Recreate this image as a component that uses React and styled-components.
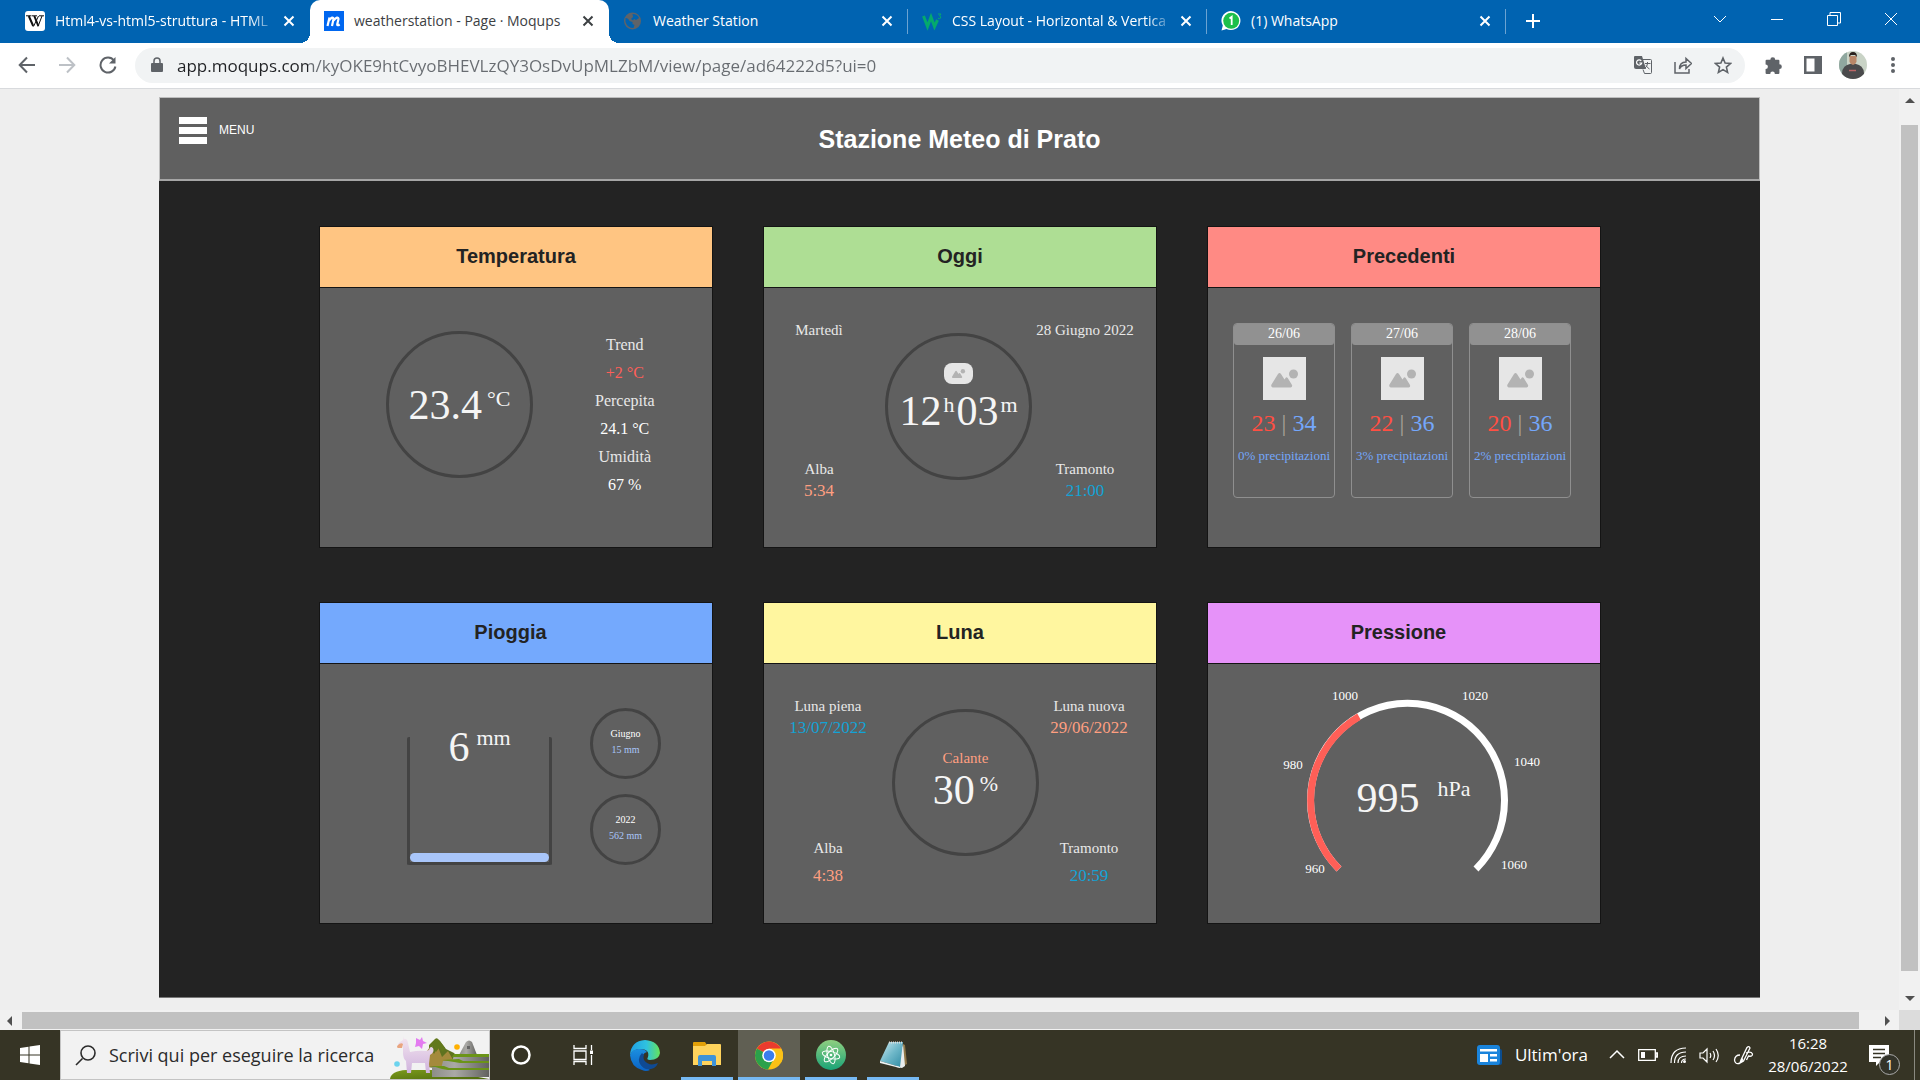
import React from "react";
import styled, { createGlobalStyle, css } from "styled-components";

const UI = `"Open Sans", "Noto Sans", sans-serif`;
const ARIAL = `"Liberation Sans", Arial, sans-serif`;
const SERIF = `Georgia, "Liberation Serif", serif`;

const C = {
  white: "#f5f5f5",
  label: "#e8e8e8",
  red: "#ff5f59",
  coral: "#ff9f80",
  cyan: "#13a3d6",
  blue: "#74a7fb",
  pale: "#a9c6fa",
  ring: "#434343",
  panel: "#606060",
};

const Global = createGlobalStyle`
  *, *::before, *::after { box-sizing: border-box; }
  html, body, #root { height: 100%; }
  body { margin: 0; overflow: hidden; font-family: ${UI}; }
  button, input { font: inherit; color: inherit; border: 0; padding: 0; margin: 0; background: none; outline: 0; }
  h1, h2, p { margin: 0; }
  svg { display: block; flex: none; }
`;

const Screen = styled.div`
  height: 100vh;
  display: flex;
  flex-direction: column;
`;

/* ---------- browser ---------- */

const TabStrip = styled.div`
  height: 43px;
  flex: none;
  display: flex;
  padding-left: 11px;
  background: #0063b1;
  color: #fff;
`;

const Tab = styled.div`
  width: 299px;
  display: flex;
  align-items: center;
  gap: 10px;
  padding: 0 13px 2px 14px;
  position: relative;
  font-size: 14px;
  line-height: 20px;

  ${(p) =>
    p.$active &&
    css`
      background: #fff;
      color: #3c4043;
      border-radius: 10px 10px 0 0;
      &::before,
      &::after {
        content: "";
        position: absolute;
        bottom: 0;
        width: 10px;
        height: 10px;
      }
      &::before {
        left: -10px;
        background: radial-gradient(circle at 0 0, transparent 10px, #fff 10px);
      }
      &::after {
        right: -10px;
        background: radial-gradient(circle at 100% 0, transparent 10px, #fff 10px);
      }
    `}
  ${(p) =>
    p.$divider &&
    css`
      &::after {
        content: "";
        position: absolute;
        right: 0;
        top: 9px;
        width: 1px;
        height: 25px;
        background: #6ba3d2;
      }
    `}
`;

const TabTitle = styled.span`
  flex: 1;
  white-space: nowrap;
  ${(p) =>
    p.$fade &&
    css`
      margin-right: -6px;
      mask-image: linear-gradient(90deg, #000 88%, transparent);
    `}
`;

const IconButton = styled.button`
  width: ${(p) => p.$w || 16}px;
  height: ${(p) => p.$h || 16}px;
  flex: none;
  display: flex;
  align-items: center;
  justify-content: center;
  color: ${(p) => p.$color || "inherit"};
`;

const WindowButtons = styled.div`
  margin-left: auto;
  display: flex;
  align-items: flex-start;
`;

const Toolbar = styled.div`
  height: 46px;
  flex: none;
  display: flex;
  align-items: center;
  padding: 0 8px 1px 7px;
  background: #fff;
  border-bottom: 1px solid #d8dadd;
  color: #5f6368;
`;

const Omnibox = styled.label`
  flex: 1;
  height: 35px;
  margin: 0 8px 0 7px;
  padding: 0 8px 0 14px;
  display: flex;
  align-items: center;
  gap: 12px;
  border-radius: 18px;
  background: #f1f3f4;
`;

const Address = styled.input`
  flex: 1;
  min-width: 0;
  height: 30px;
  font-size: 17px;
  background: linear-gradient(90deg, #202124 131px, #686c71 131px);
  background-clip: text;
  -webkit-text-fill-color: transparent;
`;

/* ---------- viewport and scroll bars ---------- */

const Viewport = styled.div`
  flex: 1;
  min-height: 0;
  display: grid;
  grid-template: minmax(0, 1fr) 20px / minmax(0, 1fr) 21px;
  background: #f1f1f1;
`;

const Page = styled.main`
  display: flex;
  padding: 8px 139px 12px 159px;
  background: #eee;
`;

const ScrollBar = styled.div`
  display: flex;
  align-items: center;
  justify-content: space-between;
  flex-direction: ${(p) => (p.$vertical ? "column" : "row")};
  padding: ${(p) => (p.$vertical ? "8px 2px 8px 2px" : "2px 8px 1px 6px")};
  gap: ${(p) => (p.$vertical ? "21px" : "9px")};
`;

const Thumb = styled.div`
  flex: 1;
  align-self: stretch;
  background: #c1c1c1;
  ${(p) => (p.$vertical ? "margin-bottom: 3px;" : "margin-right: 16px;")}
`;

const Corner = styled.div`
  background: #dcdcdc;
`;

/* ---------- weather dashboard ---------- */

const Board = styled.div`
  flex: 1;
  display: flex;
  flex-direction: column;
  background: #232323;
  border-bottom: 1px solid #777;
`;

const Masthead = styled.header`
  height: 84px;
  flex: none;
  display: grid;
  grid-template-columns: 1fr auto 1fr;
  padding: 0 19px;
  background: ${C.panel};
  border: 1px solid #bdbdbd;
  border-bottom: 2px solid #a5a5a5;
  color: #fff;
  font-family: ${ARIAL};
`;

const Title = styled.h1`
  align-self: center;
  font-size: 25px;
  line-height: 28px;
  font-weight: 700;
`;

const MenuButton = styled.button`
  justify-self: start;
  align-self: start;
  display: flex;
  align-items: flex-start;
  gap: 12px;
  margin-top: 19px;
  font-size: 12px;
  line-height: 26px;
`;

const Bars = styled.span`
  width: 28px;
  height: 27px;
  display: flex;
  flex-direction: column;
  justify-content: space-between;
  &::before,
  &::after,
  i {
    content: "";
    height: 7px;
    background: #fff;
  }
`;

const Cards = styled.div`
  display: grid;
  grid-template-columns: repeat(3, 394px);
  grid-auto-rows: 322px;
  justify-content: center;
  gap: 54px 50px;
  padding: 45px 0 0 1px;
`;

const CardBox = styled.section`
  display: flex;
  flex-direction: column;
  background: ${C.panel};
  border: 1px solid #141414;
`;

const CardTitle = styled.h2`
  height: 61px;
  flex: none;
  border-bottom: 1px solid #141414;
  background: ${(p) => p.$color};
  color: #232323;
  font: 700 20px/58px ${ARIAL};
  text-align: center;
  white-space: pre;
`;

const Body = styled.div`
  flex: 1;
  display: ${(p) => (p.$columns ? "grid" : "flex")};
  grid-template-columns: ${(p) => p.$columns};
  padding: ${(p) => p.$pad};
  gap: ${(p) => p.$gap || 0}px;
  align-items: ${(p) => p.$align || "stretch"};
  font-family: ${SERIF};
`;

const Ring = styled.div`
  width: ${(p) => p.$size}px;
  height: ${(p) => p.$size}px;
  flex: none;
  display: flex;
  flex-direction: column;
  align-items: center;
  justify-content: center;
  gap: ${(p) => p.$gap || 0}px;
  padding-bottom: ${(p) => p.$lift || 0}px;
  border: 3px solid ${C.ring};
  border-radius: 50%;
`;

const DialCell = styled.div`
  justify-self: end;
  padding-top: 14px;
`;

const Reading = styled.p`
  display: flex;
  align-items: baseline;
  gap: ${(p) => p.$gap || 0}px;
  color: ${C.white};
  font-size: 42px;
  line-height: ${(p) => p.$line || 42}px;
  white-space: nowrap;
`;

const Unit = styled.span`
  align-self: flex-start;
  font-size: 22px;
  line-height: ${(p) => p.$line || 30}px;
`;

const Text = styled.span`
  color: ${(p) => p.$color || C.label};
  font-size: ${(p) => p.$size || 15}px;
  line-height: ${(p) => p.$line || 22}px;
  white-space: nowrap;
`;

const Stack = styled.div`
  display: flex;
  flex-direction: column;
  align-items: center;
  gap: ${(p) => p.$gap || 0}px;
  ${(p) => p.$spread && "justify-content: space-between;"}
`;

const Day = styled.article`
  width: 102px;
  height: 175px;
  display: flex;
  flex-direction: column;
  align-items: center;
  border: 1px solid #8f8f8f;
  border-radius: 4px;
  overflow: hidden;
`;

const DayName = styled.p`
  align-self: stretch;
  height: 21px;
  margin-bottom: 12px;
  background: #919191;
  border-radius: 0 0 3px 3px;
  color: #fff;
  font-size: 14px;
  line-height: 20px;
  text-align: center;
`;

const Temps = styled.p`
  display: flex;
  gap: 6px;
  margin: 6px 0 5px;
  font-size: 24px;
  line-height: 34px;
`;

const Low = styled.span`
  color: #ff4f43;
`;

const High = styled.span`
  color: ${C.blue};
`;

const Slash = styled.span`
  color: #a9a29a;
`;

const Thumbnail = styled.div`
  width: ${(p) => p.$w}px;
  height: ${(p) => p.$h}px;
  flex: none;
  display: flex;
  align-items: center;
  justify-content: center;
  border-radius: ${(p) => p.$radius || 0}px;
  background: #e6e6e6;
`;

const Beaker = styled.div`
  width: 145px;
  height: 128px;
  display: flex;
  flex-direction: column;
  align-items: center;
  justify-content: space-between;
  border: solid ${C.ring};
  border-width: 0 3px 3px;
  border-radius: 2px;
`;

const Water = styled.div`
  align-self: stretch;
  height: 9px;
  border-radius: 5px;
  background: ${C.pale};
`;

const GaugeLabel = styled.text`
  fill: #fff;
  font-size: 13px;
  text-anchor: middle;
`;

const GaugeValue = styled.text`
  fill: ${C.white};
  font-size: ${(p) => p.$size}px;
  text-anchor: middle;
`;

/* ---------- taskbar ---------- */

const Taskbar = styled.footer`
  height: 50px;
  flex: none;
  display: flex;
  background: #363425;
  color: #fff;
`;

const Search = styled.label`
  width: 430px;
  display: flex;
  align-items: center;
  padding-left: 14px;
  background: #f2f2f2;
  border: 1px solid #c4c4c4;
  color: #2b2b2b;
`;

const SearchInput = styled.input`
  flex: 1;
  min-width: 0;
  padding-left: 13px;
  font-size: 18px;
  &::placeholder {
    color: #2b2b2b;
    opacity: 1;
  }
`;

const TaskButton = styled.button`
  width: ${(p) => p.$w || 62}px;
  display: flex;
  align-items: center;
  justify-content: center;
  background: ${(p) => (p.$active ? "#605f53" : "transparent")};
  position: relative;
  ${(p) =>
    p.$open &&
    css`
      &::after {
        content: "";
        position: absolute;
        bottom: 0;
        left: ${p.$active ? 0 : 5}px;
        right: ${p.$active ? 0 : 5}px;
        height: 3px;
        background: #76b9f3;
      }
    `}
`;

const Tray = styled.div`
  margin-left: auto;
  display: flex;
  align-items: stretch;
`;

const News = styled.button`
  display: flex;
  align-items: center;
  gap: 13px;
  padding-right: 14px;
  font-size: 17px;
  line-height: 24px;
`;

const Clock = styled.button`
  width: 94px;
  font-size: 15px;
  line-height: 23px;
  text-align: center;
  white-space: nowrap;
`;

const Notice = styled.button`
  width: 59px;
  display: flex;
  align-items: center;
  justify-content: center;
  position: relative;
`;

const Count = styled.span`
  position: absolute;
  left: 24px;
  top: 24px;
  width: 21px;
  height: 21px;
  border: 1px solid #aaa;
  border-radius: 50%;
  background: #333329;
  font-size: 14px;
  line-height: 19px;
  text-align: center;
`;

const ShowDesktop = styled.div`
  width: 6px;
  border-left: 1px solid #8a8980;
`;

/* ---------- drawings ---------- */

const Stroke = ({ d, w = 16, h = w, box = `0 0 ${w} ${h}`, sw = 2, children, ...rest }) => (
  <svg width={w} height={h} viewBox={box} fill="none" stroke="currentColor" strokeWidth={sw} {...rest}>
    <path d={d} />
    {children}
  </svg>
);

const Close = () => (
  <IconButton aria-label="Chiudi">
    <Stroke w={16} d="M3.500 3.500l9 9M12.500 3.500l-9 9" />
  </IconButton>
);

const Landscape = ({ size }) => (
  <svg width={size} height={size} viewBox="0 0 43 43" fill="#b3b3b3">
    <path d="M10 30.500a2 2 0 0 1-1.500-3l6.500-10.500q1.500-2 3 0l3.500 5.500 1-1.500q1-1.300 2.200 0l4.300 7q.7 2.300-1.500 2.500z" />
    <circle cx="30.500" cy="17" r="4.500" />
  </svg>
);

const favicons = {
  wiki: (
    <svg width="20" height="20" viewBox="0 0 20 20">
      <rect width="20" height="20" rx="3" fill="#fff" />
      <path d="M1 4.800h5.500M7 4.800h5M14 4.800h5M13.500 5L8.500 15.500M17 5l-4 10.500" fill="none" stroke="#111" strokeWidth="1" />
      <path d="M3.800 5l4.400 10M9.300 5l4 10" fill="none" stroke="#111" strokeWidth="2" />
    </svg>
  ),
  moqups: (
    <svg width="20" height="20" viewBox="0 0 20 20">
      <rect width="20" height="20" fill="#0067f0" />
      <path d="M3.500 15l2-8.500M5 9.500q4-5 4.500-1.500L8 15M9.500 9.500q4.500-5 5-1.500l-1.300 5.500q0 1.500 2.500 0" fill="none" stroke="#fff" strokeWidth="2.200" />
    </svg>
  ),
  globe: (
    <svg width="20" height="20" viewBox="0 0 20 20">
      <circle cx="9.500" cy="10" r="8.500" fill="#5f6368" />
      <path d="M2.500 7q3 0 4 3l3 1v2l2 1-1 3q-6 0-8-6zM9.500 3q5 0 6.500 4l-3 2-2-1-1 1.500-2-1.500 2-2z" fill="#0063b1" />
    </svg>
  ),
  w3: (
    <svg width="20" height="20" viewBox="0 0 20 20" fill="none" stroke="#04aa6d">
      <path d="M1.500 5l4 10.500L9 6l3.500 9.500L15.500 9" strokeWidth="3" />
      <path d="M16 3h3l-1.500 2q2 .5 1 2.200-1 1-2.500 0" strokeWidth="1" />
    </svg>
  ),
  whatsapp: (
    <svg width="20" height="20" viewBox="0 0 20 20">
      <path d="M.5 19.500l1.300-5A9.500 9.500 0 1 1 5.500 18z" fill="#fff" />
      <circle cx="10.200" cy="9.800" r="8" fill="#1dbf4a" />
      <path d="M8.500 7.500l2.200-1.700V14" fill="none" stroke="#fff" strokeWidth="1.800" />
    </svg>
  ),
};

const tabs = [
  { icon: "wiki", title: "Html4-vs-html5-struttura - HTML", fade: true },
  { icon: "moqups", title: "weatherstation - Page · Moqups", active: true },
  { icon: "globe", title: "Weather Station", divider: true },
  { icon: "w3", title: "CSS Layout - Horizontal & Vertica", fade: true, divider: true },
  { icon: "whatsapp", title: "(1) WhatsApp", divider: true },
];

const Llama = () => (
  <svg width="99" height="48" viewBox="0 0 99 48">
    <defs>
      <linearGradient id="rock" x1="0" x2="1">
        <stop offset="0" stopColor="#8d8d88" />
        <stop offset=".4" stopColor="#aaa9a6" />
        <stop offset="1" stopColor="#62625f" />
      </linearGradient>
      <linearGradient id="hill" x1="0" y1="0" x2="1" y2="1">
        <stop offset="0" stopColor="#7c9a1c" />
        <stop offset="1" stopColor="#4d6a0b" />
      </linearGradient>
      <linearGradient id="wool" x1="0" y1="0" x2="0" y2="1">
        <stop offset="0" stopColor="#f4e6ef" />
        <stop offset="1" stopColor="#cfb3dd" />
      </linearGradient>
    </defs>
    <path d="M37 36l3-16 5-10q2-3 5 0l6 8 8 4 5 6v12z" fill="#5f7220" />
    <path d="M36 36l1-16 3-4 4 7 4-7 4 10 6-6 8 14z" fill="#a48a3c" />
    <path d="M39 14l6-6q2-2 4 1l6 8-2 4-4-4-3 4-3-6-4 5z" fill="#62791c" />
    <path d="M0 48q1-8 16-9h34l49 9z" fill="url(#hill)" />
    <path d="M69 24l7-13q3-3 6 0l5 13z" fill="url(#rock)" />
    <path d="M77 15h3v3h-3z" fill="#666" />
    <path d="M64 24h35v7H62zM53 30h46v8H51zM42 36h57v10H42z" fill="url(#rock)" />
    <path d="M64 23h35v3H62zM52 29l17-1 4 2h26v2H70zM42 35h12l5 2h40v2H58l-6-1z" fill="#6b9418" />
    <path d="M14 8q3-1 4 4l2 9q9-2 16-1l3-1q1-5 4-2 2 4-3 7l-1 9 1 9h-4l-1-10H22l-1 10h-4l-1-12q-3-3-3-8v-8l-4 1q-2-2 1-4l3-2 1-4z" fill="url(#wool)" />
    <path d="M8 14q3-3 5-1l-1 4-4 0q-2-1 0-3z" fill="#e9a57f" />
    <path d="M26 7l4 2 2-3 1 4 4 2-4 1-1 5-3-3-4 1 1-4z" fill="#e37bf0" />
    <circle cx="67" cy="16" r="2.800" fill="#ffb000" />
    <circle cx="7" cy="33" r="2.800" fill="#6bd3ee" />
  </svg>
);

const WindowsLogo = () => (
  <svg width="20" height="20" viewBox="0 0 20 20" fill="#fff">
    <path d="M0 3l8.500-1.200v7.700H0zM9.500 1.600L20 0v9.500H9.500zM0 10.500h8.500v7.700L0 17zM9.500 10.500H20V20L9.500 18.400z" />
  </svg>
);

const TaskView = () => (
  <svg width="20" height="20" viewBox="0 0 20 20" fill="none" stroke="#fff" strokeWidth="1.300">
    <path d="M1 0v3.500h12V0M1 20v-3.500h12V20M1 6h12v8.500H1zM18.500 0v5M18.500 10v10" />
    <path d="M17 5.500h3v3.500h-3z" fill="#fff" stroke="none" />
  </svg>
);

const Edge = () => (
  <svg width="30" height="31" viewBox="0 0 30 31">
    <defs>
      <linearGradient id="edgeTop" x1="0" x2="1">
        <stop offset="0" stopColor="#1f9fe6" />
        <stop offset=".55" stopColor="#2fc2df" />
        <stop offset="1" stopColor="#66e35a" />
      </linearGradient>
      <linearGradient id="edgeLeft" x1="0" y1="0" x2="0" y2="1">
        <stop offset="0" stopColor="#1b8fe0" />
        <stop offset="1" stopColor="#0a62c4" />
      </linearGradient>
    </defs>
    <path d="M0 15Q1 1 15 0q14 1 15 13-1 7-10 7-4 0-2-3 2-8-8-8Q3 9 0 15z" fill="url(#edgeTop)" />
    <path d="M0 15q3-7 10-6 5 0 7 3-6 2-5 9 2 6 8 9-4 2-8 0Q1 27 0 15z" fill="url(#edgeLeft)" />
    <path d="M12 13q-5 5-2 11 5 8 14 4 3-2 4-5-9 4-14-3-1-3 0-5z" fill="#0f4a93" />
  </svg>
);

const Explorer = () => (
  <svg width="28" height="26" viewBox="0 0 28 26">
    <path d="M0 1q0-1 1-1h11l2 3v4H0z" fill="#e3a008" />
    <path d="M0 4h12l2-2h13q1 0 1 1v20H0z" fill="#ffd35c" />
    <path d="M5 24v-9q0-2 2-2h14q2 0 2 2v9h-4v-5H9v5z" fill="#3f93d8" />
  </svg>
);

const Chrome = () => (
  <svg width="28" height="29" viewBox="0 0 28 28">
    <circle cx="14" cy="14" r="14" fill="#fbc116" />
    <path d="M14 14L1.900 7A14 14 0 0 1 26.100 7z" fill="#ea3b2e" />
    <path d="M14 14L1.900 7A14 14 0 0 0 13 28l6-11z" fill="#2ba14b" />
    <path d="M14 7h12.100a14 14 0 0 1 0 14L20 17z" fill="#fbc116" />
    <circle cx="14" cy="14" r="6.800" fill="#fff" />
    <circle cx="14" cy="14" r="5.300" fill="#3b7ded" />
  </svg>
);

const Atom = () => (
  <svg width="30" height="30" viewBox="0 0 30 30">
    <defs>
      <linearGradient id="atom" x1="0" y1="0" x2="0" y2="1">
        <stop offset="0" stopColor="#8fcf80" />
        <stop offset="1" stopColor="#1aa377" />
      </linearGradient>
    </defs>
    <circle cx="15" cy="15" r="15" fill="url(#atom)" />
    <g fill="none" stroke="#fff" strokeWidth="1">
      <ellipse cx="15" cy="15" rx="9" ry="3.500" transform="rotate(15 15 15)" />
      <ellipse cx="15" cy="15" rx="9" ry="3.500" transform="rotate(75 15 15)" />
      <ellipse cx="15" cy="15" rx="9" ry="3.500" transform="rotate(135 15 15)" />
    </g>
    <circle cx="15" cy="15" r="1.300" fill="#fff" />
  </svg>
);

const Notepad = () => (
  <svg width="28" height="28" viewBox="0 0 28 28">
    <defs>
      <linearGradient id="pad" x1="0" y1="0" x2="1" y2="1">
        <stop offset="0" stopColor="#cfeaf0" />
        <stop offset=".5" stopColor="#6fb8c9" />
        <stop offset="1" stopColor="#2f8aa3" />
      </linearGradient>
    </defs>
    <path d="M24 3l2 1 2 19-4 2z" fill="#8f7748" />
    <path d="M24 3l2 22-3 2-6-1z" fill="#e8ecec" />
    <path d="M10 1h14l-3 25-20-6z" fill="url(#pad)" />
    <path d="M1 20l20 6v1L1 22z" fill="#eef4f5" />
    <path d="M10 1.500h14" stroke="#ddd" strokeWidth="2" strokeDasharray="1 1" />
  </svg>
);

const Avatar = () => (
  <svg width="28" height="28" viewBox="0 0 28 28">
    <defs>
      <clipPath id="face"><circle cx="14" cy="14" r="14" /></clipPath>
    </defs>
    <g clipPath="url(#face)">
      <path d="M0 0h28v28H0z" fill="#c9d3c6" />
      <path d="M0 0h8v28H0z" fill="#8fa79f" />
      <path d="M3 28q-1-12 5-14l6-2 6 2q6 2 5 14z" fill="#4a4a4c" />
      <path d="M10.500 5h7v6q-3.500 6-7 0z" fill="#b98768" />
      <path d="M10 6q0-5 4-5t4 5l-2-2h-4z" fill="#2a211d" />
      <path d="M10 19.500h7" stroke="#b66" strokeWidth="1.500" />
    </g>
  </svg>
);

/* ---------- cards ---------- */

const Card = ({ title, color, children }) => (
  <CardBox>
    <CardTitle $color={color}>{title}</CardTitle>
    {children}
  </CardBox>
);

const Pair = ({ label, value, color, gap }) => (
  <Stack $gap={gap}>
    <Text>{label}</Text>
    {value && <Text $size={17} $color={color}>{value}</Text>}
  </Stack>
);

const days = [
  { date: "26/06", low: 23, high: 34, rain: 0 },
  { date: "27/06", low: 22, high: 36, rain: 3 },
  { date: "28/06", low: 20, high: 36, rain: 2 },
];

const marks = [
  [960, 38, 189],
  [980, 16, 85],
  [1000, 68, 16],
  [1020, 198, 16],
  [1040, 250, 82],
  [1060, 237, 185],
];

const conditions = [
  ["Trend"],
  ["+2 °C", C.red],
  ["Percepita"],
  ["24.1 °C", "#fff"],
  ["Umidità"],
  ["67 %", "#fff"],
];

export default function App() {
  return (
    <Screen>
      <Global />
      <TabStrip>
        {tabs.map((t) => (
          <Tab key={t.icon} $active={t.active} $divider={t.divider}>
            {favicons[t.icon]}
            <TabTitle $fade={t.fade}>{t.title}</TabTitle>
            <Close />
          </Tab>
        ))}
        <IconButton $w={54} $h={41} aria-label="Nuova scheda">
          <Stroke w={16} d="M8 1v14M1 8h14" />
        </IconButton>
        <WindowButtons>
          <IconButton $w={57} $h={37} aria-label="Cerca schede">
            <Stroke w={14} sw={1} d="M1 4l6 6 6-6" />
          </IconButton>
          <IconButton $w={57} $h={37} aria-label="Riduci">
            <Stroke w={14} sw={1} d="M1 7.500h12" />
          </IconButton>
          <IconButton $w={57} $h={37} aria-label="Ripristina">
            <Stroke w={14} sw={1} d="M.5 3.500h10v10H.500zM3 3.500v-3h10.500v10.500h-3" />
          </IconButton>
          <IconButton $w={58} $h={37} aria-label="Chiudi finestra">
            <Stroke w={14} sw={1} d="M1 1l12 12M13 1L1 13" />
          </IconButton>
        </WindowButtons>
      </TabStrip>

      <Toolbar>
        <IconButton $w={40} $h={40} aria-label="Indietro">
          <Stroke w={18} d="M17 9H2M9 1.500L1.700 9 9 16.500" />
        </IconButton>
        <IconButton $w={40} $h={40} $color="#bdc1c6" aria-label="Avanti">
          <Stroke w={18} d="M1 9h15M9 1.500L16.300 9 9 16.500" />
        </IconButton>
        <IconButton $w={41} $h={40} aria-label="Ricarica">
          <Stroke w={18} d="M15 4.500A7.500 7.500 0 1 0 16.400 10.500">
            <path d="M16.500 1v6.500H10z" fill="currentColor" stroke="none" />
          </Stroke>
        </IconButton>
        <Omnibox>
          <svg width="16" height="16" viewBox="0 0 16 16" fill="#5f6368">
            <path d="M3 6h10q1 0 1 1v7q0 1-1 1H3q-1 0-1-1V7q0-1 1-1z" />
            <path d="M5 6V4a3 3 0 0 1 6 0v2" fill="none" stroke="#5f6368" strokeWidth="1.500" />
          </svg>
          <Address aria-label="Indirizzo" defaultValue="app.moqups.com/kyOKE9htCvyoBHEVLzQY3OsDvUpMLZbM/view/page/ad64222d5?ui=0" />
          <IconButton $w={28} $h={30} aria-label="Traduci">
            <svg width="18" height="18" viewBox="0 0 18 18">
              <path d="M1 0h7l4 13H2q-2 0-2-2V1q0-1 1-1z" fill="#5f6368" />
              <path d="M8 3.500h8.500q1 0 1 1v12q0 1-1 1h-6L9 13.500" fill="none" stroke="#5f6368" />
              <path d="M11 7.500h5.500M13.500 6v1.500q0 3-3 5M12 9.500q1 2 3.500 3.500" fill="none" stroke="#5f6368" />
              <path d="M7.200 4.800A2.600 2.600 0 1 0 7.700 7H5.300" fill="none" stroke="#fff" strokeWidth="1.200" />
            </svg>
          </IconButton>
          <IconButton $w={28} $h={30} aria-label="Condividi">
            <Stroke w={18} sw={1.500} d="M1 6v11h14v-4M5.500 13q0-7 6.500-7V2.500l5.500 5-5.500 5V9q-5 0-6.500 4z" />
          </IconButton>
          <IconButton $w={28} $h={30} aria-label="Preferiti">
            <Stroke w={18} sw={1.600} d="M9 2l2.100 5 5.400.500-4.100 3.600 1.200 5.300L9 13.600l-4.600 2.800 1.200-5.300L1.500 7.500 6.900 7z" />
          </IconButton>
        </Omnibox>
        <IconButton $w={40} $h={40} aria-label="Estensioni">
          <svg width="19" height="19" viewBox="0 0 18 18" fill="currentColor">
            <path d="M6 3.500a2.300 2.300 0 0 1 4.600 0h3q1 0 1 1v3.300a2.300 2.300 0 0 1 0 4.600V16q0 1-1 1h-3.300a2.200 2.200 0 0 0-4.400 0H2.500q-1 0-1-1v-3.600a2.200 2.200 0 0 0 0-4.400V4.500q0-1 1-1z" />
          </svg>
        </IconButton>
        <IconButton $w={39} $h={40} aria-label="Pannello laterale">
          <svg width="18" height="18" viewBox="0 0 18 18">
            <path d="M0 0h18v18H0z" fill="#5f6368" />
            <path d="M2.500 2.500h8v13h-8z" fill="#fff" />
          </svg>
        </IconButton>
        <IconButton $w={42} $h={40} aria-label="Profilo">
          <Avatar />
        </IconButton>
        <IconButton $w={38} $h={40} aria-label="Altro">
          <svg width="4" height="18" viewBox="0 0 4 18" fill="currentColor">
            <circle cx="2" cy="3" r="2" />
            <circle cx="2" cy="9" r="2" />
            <circle cx="2" cy="15" r="2" />
          </svg>
        </IconButton>
      </Toolbar>

      <Viewport>
        <Page>
          <Board>
            <Masthead>
              <MenuButton>
                <Bars><i /></Bars>
                MENU
              </MenuButton>
              <Title>Stazione Meteo di Prato</Title>
            </Masthead>
            <Cards>
              <Card title="Temperatura" color="#ffc582">
                <Body $pad="43px 0 0 66px" $gap={62}>
                  <Ring $size={147}>
                    <Reading $gap={5}>23.4<Unit>°C</Unit></Reading>
                  </Ring>
                  <Stack>
                    {conditions.map(([text, color]) => (
                      <Text key={text} $size={16} $line={28} $color={color}>{text}</Text>
                    ))}
                  </Stack>
                </Body>
              </Card>

              <Card title="Oggi" color="#aede94">
                <Body $columns="110px 158px 106px" $pad="31px 0 45px">
                  <Stack $spread>
                    <Pair label="Martedì" />
                    <Pair label="Alba" value="5:34" color={C.coral} />
                  </Stack>
                  <DialCell>
                    <Ring $size={147} $gap={6} $lift={18}>
                      <Thumbnail $w={29} $h={21} $radius={8}><Landscape size={21} /></Thumbnail>
                      <Reading $gap={2}>12<Unit>h</Unit>03<Unit>m</Unit></Reading>
                    </Ring>
                  </DialCell>
                  <Stack $spread>
                    <Pair label="28 Giugno 2022" />
                    <Pair label="Tramonto" value="21:00" color={C.cyan} />
                  </Stack>
                </Body>
              </Card>

              <Card title="Precedenti" color="#ff8a84">
                <Body $pad="35px 0 0 25px" $gap={16}>
                  {days.map((d) => (
                    <Day key={d.date}>
                      <DayName>{d.date}</DayName>
                      <Thumbnail $w={43} $h={43}><Landscape size={43} /></Thumbnail>
                      <Temps>
                        <Low>{d.low}</Low>
                        <Slash>|</Slash>
                        <High>{d.high}</High>
                      </Temps>
                      <Text $size={13} $color={C.blue}>{d.rain}% precipitazioni</Text>
                    </Day>
                  ))}
                </Body>
              </Card>

              <Card title={"Pioggia\u00a0\u00a0"} color="#74a9fd">
                <Body $pad="44px 0 58px 87px" $gap={38} $align="flex-end">
                  <Beaker>
                    <Reading $gap={7} $line={20}>6<Unit $line={2}>mm</Unit></Reading>
                    <Water />
                  </Beaker>
                  <Stack $gap={15}>
                    <Ring $size={71} $lift={3}>
                      <Text $size={10} $line={16} $color="#fff">Giugno</Text>
                      <Text $size={10} $line={16} $color={C.pale}>15 mm</Text>
                    </Ring>
                    <Ring $size={71} $lift={3}>
                      <Text $size={10} $line={16} $color="#fff">2022</Text>
                      <Text $size={10} $line={16} $color={C.pale}>562 mm</Text>
                    </Ring>
                  </Stack>
                </Body>
              </Card>

              <Card title="Luna" color="#fff69f">
                <Body $columns="128px 147px 100px" $pad="31px 0 36px">
                  <Stack $spread>
                    <Pair label="Luna piena" value="13/07/2022" color={C.cyan} />
                    <Pair label="Alba" value="4:38" color={C.coral} gap={6} />
                  </Stack>
                  <DialCell>
                    <Ring $size={147} $lift={8}>
                      <Text $color={C.coral}>Calante</Text>
                      <Reading $gap={5}>30<Unit>%</Unit></Reading>
                    </Ring>
                  </DialCell>
                  <Stack $spread>
                    <Pair label="Luna nuova" value="29/06/2022" color={C.coral} />
                    <Pair label="Tramonto" value="20:59" color={C.cyan} gap={6} />
                  </Stack>
                </Body>
              </Card>

              <Card title={"Pressione\u00a0\u00a0"} color="#e692f9">
                <Body $pad="20px 0 0 69px">
                  <svg width="270" height="200" viewBox="0 0 270 200" role="img" aria-label="Pressione 995 hPa">
                    <g fill="none" strokeWidth="7">
                      <path d="M62 185A97 97 0 1 1 199 185" stroke="#fff" />
                      <path d="M62 185A97 97 0 0 1 82 32.600" stroke="#ff5f57" />
                    </g>
                    {marks.map(([label, x, y]) => (
                      <GaugeLabel key={label} x={x} y={y}>{label}</GaugeLabel>
                    ))}
                    <GaugeValue $size={42} x="111" y="128">995</GaugeValue>
                    <GaugeValue $size={22} x="177" y="112">hPa</GaugeValue>
                  </svg>
                </Body>
              </Card>
            </Cards>
          </Board>
        </Page>
        <ScrollBar $vertical>
          <svg width="10" height="7" viewBox="0 0 10 7" fill="#505050"><path d="M0 6l5-5 5 5z" /></svg>
          <Thumb $vertical />
          <svg width="10" height="7" viewBox="0 0 10 7" fill="#505050"><path d="M0 1l5 5 5-5z" /></svg>
        </ScrollBar>
        <ScrollBar>
          <svg width="7" height="10" viewBox="0 0 7 10" fill="#505050"><path d="M6 0L1 5l5 5z" /></svg>
          <Thumb />
          <svg width="7" height="10" viewBox="0 0 7 10" fill="#505050"><path d="M1 0l5 5-5 5z" /></svg>
        </ScrollBar>
        <Corner />
      </Viewport>

      <Taskbar>
        <TaskButton $w={60} aria-label="Start"><WindowsLogo /></TaskButton>
        <Search>
          <Stroke w={21} sw={1.600} d="M7.500 13.500L1 20">
            <circle cx="13" cy="8" r="7" />
          </Stroke>
          <SearchInput type="text" aria-label="Cerca" placeholder="Scrivi qui per eseguire la ricerca" />
          <Llama />
        </Search>
        <TaskButton aria-label="Cortana">
          <Stroke w={20} sw={2.500} d=""><circle cx="10" cy="10" r="8.500" /></Stroke>
        </TaskButton>
        <TaskButton aria-label="Visualizzazione attività"><TaskView /></TaskButton>
        <TaskButton aria-label="Edge"><Edge /></TaskButton>
        <TaskButton $open aria-label="Esplora file"><Explorer /></TaskButton>
        <TaskButton $open $active aria-label="Chrome"><Chrome /></TaskButton>
        <TaskButton $open aria-label="Atom"><Atom /></TaskButton>
        <TaskButton $open aria-label="Blocco note"><Notepad /></TaskButton>
        <Tray>
          <News>
            <svg width="25" height="21" viewBox="0 0 25 21">
              <rect x="3" y="4" width="22" height="16" rx="2" fill="#0b4d8f" />
              <rect width="23" height="20" rx="3" fill="#1a84dc" />
              <path d="M3 4h17v2.500H3zM3 9h8v8H3zM13 9h7v2.500h-7zM13 14h7v2.500h-7z" fill="#fff" />
            </svg>
            Ultim'ora
          </News>
          <TaskButton $w={30} aria-label="Icone nascoste"><Stroke w={16} sw={1.500} d="M1 11l7-7 7 7" /></TaskButton>
          <TaskButton $w={31} aria-label="Batteria">
            <svg width="20" height="12" viewBox="0 0 20 12">
              <path d="M.7.700h16.600v10.600H.700zM18 4h1.500v4H18z" fill="none" stroke="#fff" strokeWidth="1.300" />
              <path d="M3 3h4v6H3z" fill="#fff" />
            </svg>
          </TaskButton>
          <TaskButton $w={30} aria-label="Wi-Fi">
            <svg width="17" height="17" viewBox="0 0 17 17" fill="none" stroke="#fff" strokeWidth="1.200">
              <path d="M1 16Q1 1 16 1M4.500 16Q4.500 5 16 5M8 16Q8 9 16 9M11.500 16q0-4 4.500-4" />
              <circle cx="14.500" cy="14.500" r="1.500" fill="#fff" stroke="none" />
            </svg>
          </TaskButton>
          <TaskButton $w={32} aria-label="Volume">
            <Stroke w={21} h={17} sw={1.200} d="M1 6h3l4-4v13l-4-4H1zM11 6q1.500 2.500 0 5M14 4q3 4.500 0 9M17 2q4.500 6.500 0 13" />
          </TaskButton>
          <TaskButton $w={36} aria-label="Penna">
            <Stroke w={21} sw={1.300} d="M8 15L14 2.500q2-2 3 .500L10.500 16 7 18zM7 10q-5 0-5.500 5 .5 4 4 3.500 4-1 4-5M13 8q5-2 6.500 1 0 3-4 2l-2 4" />
          </TaskButton>
          <Clock>16:28<br />28/06/2022</Clock>
          <Notice aria-label="Notifiche">
            <svg width="40" height="26" viewBox="0 0 40 26">
              <path d="M4 3h20v17h-9l-4 4v-4H4z" fill="#fff" />
              <path d="M8 7.500h12M8 11.500h12M8 15.500h8" stroke="#363425" strokeWidth="1.300" />
            </svg>
            <Count>1</Count>
          </Notice>
          <ShowDesktop />
        </Tray>
      </Taskbar>
    </Screen>
  );
}
